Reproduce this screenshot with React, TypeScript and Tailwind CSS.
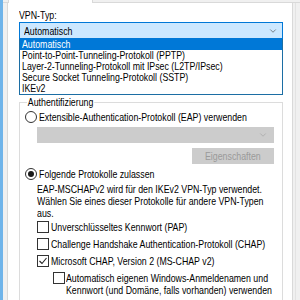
import { ChevronDown } from "lucide-react";
import type { ReactNode } from "react";

const items = [
  "Automatisch",
  "Point-to-Point-Tunneling-Protokoll (PPTP)",
  "Layer-2-Tunneling-Protokoll mit IPsec (L2TP/IPsec)",
  "Secure Socket Tunneling-Protokoll (SSTP)",
  "IKEv2",
];

// the dialog text is set narrow, like the screenshot
function T({ children, className = "" }: { children: ReactNode; className?: string }) {
  return (
    <span className={"inline-block origin-left scale-x-[0.8] whitespace-nowrap " + className}>
      {children}
    </span>
  );
}

function Radio({ checked }: { checked?: boolean }) {
  return (
    <span className="flex h-[12px] w-[12px] shrink-0 items-center justify-center rounded-full border border-[#333] bg-white">
      {checked && <span className="h-[6px] w-[6px] rounded-full bg-[#1a1a1a]" />}
    </span>
  );
}

function Check({ checked }: { checked?: boolean }) {
  return (
    <span className="flex h-[12px] w-[12px] shrink-0 items-center justify-center border border-[#333] bg-white">
      {checked && (
        <svg width="10" height="10" viewBox="0 0 10 10">
          <path d="M1.5 5 L4 7.5 L8.5 2" fill="none" stroke="#222" strokeWidth="1.1" />
        </svg>
      )}
    </span>
  );
}

export default function App() {
  return (
    <div className="flex h-[300px] w-[300px] overflow-hidden bg-[#f0f0f0] text-[11px] leading-[12px] text-black [font-family:'Liberation_Sans',Arial,sans-serif]">
      <div className="w-[3px] shrink-0 bg-[#6fb4ea]" />
      <div className="flex flex-1 flex-col">
        <div className="flex h-[3px] shrink-0">
          <div className="w-[5px] border-b border-[#d9d9d9]" />
          <div className="w-[85px] border-x border-[#d9d9d9] bg-white" />
          <div className="flex-1 border-b border-[#d9d9d9]" />
        </div>
        <div className="flex flex-1">
          <div className="ml-[4px] flex w-[286px] flex-col border-l border-r border-[#d9d9d9] bg-white pl-[11px] pr-[9px]">
            <div className="mt-[6px] h-[12px]">
              <T>VPN-Typ:</T>
            </div>
            <div className="mt-[1px] flex h-[17px] items-center justify-between border border-[#0078d7] bg-[#cce8ff] pl-[4px] pr-[4px]">
              <T>Automatisch</T>
              <ChevronDown size={10} strokeWidth={1.5} className="text-[#444]" />
            </div>
            <div className="flex flex-col border border-t-0 border-[#1c6ea4] bg-white">
              {items.map((it, i) => (
                <div
                  key={it}
                  className={
                    i === 0
                      ? "h-[11px] bg-[#0078d7] pl-[2px] text-white"
                      : "h-[11px] pl-[2px]"
                  }
                >
                  <T className="relative top-[-1px]">{it}</T>
                </div>
              ))}
            </div>
            <div className="mt-[7px] flex flex-1 flex-col border border-b-0 border-[#dcdcdc] pl-[5px] pr-[8px]">
              <div className="-mt-[7px] ml-[2px] h-[12px]">
                <T className="bg-white px-[1px]">Authentifizierung</T>
              </div>
              <div className="mt-[3px] flex items-center gap-[2px]">
                <Radio />
                <T>Extensible-Authentication-Protokoll (EAP) verwenden</T>
              </div>
              <div className="ml-[12px] mt-[4px] flex h-[16px] items-center justify-end bg-[#cccccc] pr-[6px]">
                <ChevronDown size={10} strokeWidth={1.5} className="text-[#a0a0a0]" />
              </div>
              <div className="mt-[5px] flex justify-end">
                <div className="flex h-[16px] w-[82px] items-center justify-center bg-[#cccccc] text-[#9a9a9a]">
                  <span className="inline-block scale-x-[0.8] whitespace-nowrap">Eigenschaften</span>
                </div>
              </div>
              <div className="mt-[4px] flex items-center gap-[2px]">
                <Radio checked />
                <T>Folgende Protokolle zulassen</T>
              </div>
              <div className="ml-[12px] mt-[3px] flex flex-col">
                <T>EAP-MSCHAPv2 wird für den IKEv2 VPN-Typ verwendet.</T>
                <T>Wählen Sie eines dieser Protokolle für andere VPN-Typen</T>
                <T>aus.</T>
              </div>
              <div className="ml-[12px] mt-[2px] flex flex-col gap-[5px]">
                <div className="flex items-center gap-[2px]">
                  <Check />
                  <T>Unverschlüsseltes Kennwort (PAP)</T>
                </div>
                <div className="flex items-center gap-[2px]">
                  <Check />
                  <T>Challenge Handshake Authentication-Protokoll (CHAP)</T>
                </div>
                <div className="flex items-center gap-[2px]">
                  <Check checked />
                  <T>Microsoft CHAP, Version 2 (MS-CHAP v2)</T>
                </div>
                <div className="ml-[16px] flex items-start gap-[1px]">
                  <Check />
                  <span className="flex flex-col">
                    <T>Automatisch eigenen Windows-Anmeldenamen und</T>
                    <T>Kennwort (und Domäne, falls vorhanden) verwenden</T>
                  </span>
                </div>
              </div>
            </div>
          </div>
          <div className="ml-[2px] w-[1px] bg-[#e3e3e3]" />
        </div>
      </div>
    </div>
  );
}
